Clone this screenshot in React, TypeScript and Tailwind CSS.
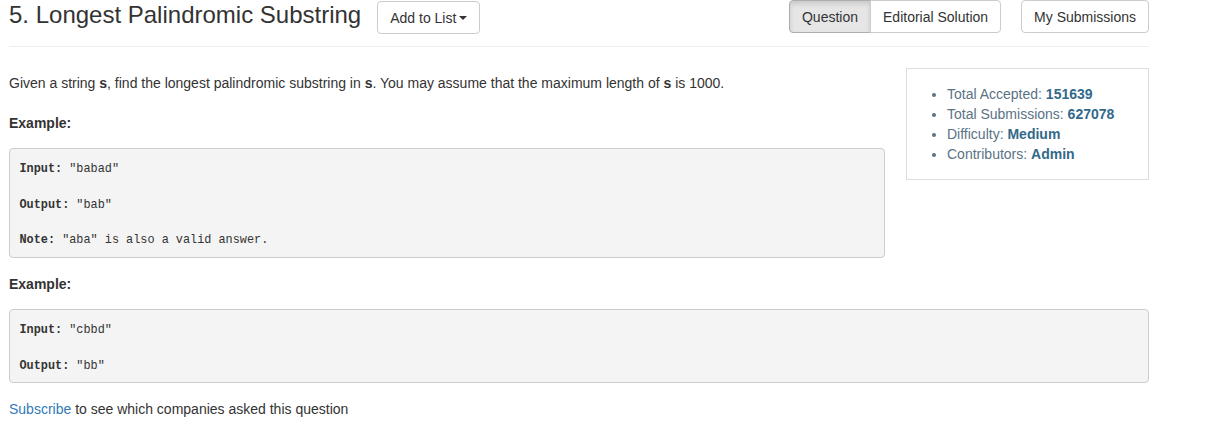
const btn =
  "h-[33px] px-3 text-[14px] leading-[20px] text-[#333] bg-white border border-[#ccc] flex items-center";

const pre =
  "mt-[15px] overflow-auto bg-[#f4f4f4] border border-[#ccc] rounded-[4px] px-[9.5px] pt-[12px] pb-[7px] text-[11.85px] leading-[17.8px] text-[#333]";

export default function App() {
  return (
    <div
      className="min-h-screen bg-white text-[#333] text-[14px] leading-[20px]"
      style={{ fontFamily: '"Liberation Sans", Arial, Helvetica, sans-serif' }}
    >
      <div className="ml-[9px] w-[1140px]">
        <div className="h-[47px] border-b border-[#eee] flex items-start">
          <h3 className="text-[24px] leading-[26px] mt-[2px] font-normal text-[#333]">
            5. Longest Palindromic Substring
          </h3>
          <button className={`${btn} ml-[16px] mt-[1px] rounded-[4px]`}>
            Add to List
            <span className="inline-block w-0 h-0 ml-[3px] border-x-[4px] border-t-[4px] border-x-transparent border-t-[#333]" />
          </button>
          <div className="ml-auto flex">
            <button className="h-[33px] px-3 text-[14px] text-[#333] bg-[#e6e6e6] border border-[#adadad] rounded-l-[4px] shadow-[inset_0_3px_5px_rgba(0,0,0,0.125)] flex items-center">
              Question
            </button>
            <button className={`${btn} -ml-px rounded-r-[4px]`}>Editorial Solution</button>
            <button className={`${btn} ml-[20px] rounded-[4px]`}>My Submissions</button>
          </div>
        </div>

        <div className="flow-root">
          <div className="float-right ml-[21px] mt-[21px] w-[243px] border border-[#ddd] py-[15px]">
            <ul className="list-disc pl-[40px] text-[#5a7385] marker:text-[#5a7385]">
              <li>
                Total Accepted: <b className="text-[#32698a]">151639</b>
              </li>
              <li>
                Total Submissions: <b className="text-[#32698a]">627078</b>
              </li>
              <li>
                Difficulty: <b className="text-[#32698a]">Medium</b>
              </li>
              <li>
                Contributors: <b className="text-[#32698a]">Admin</b>
              </li>
            </ul>
          </div>

          <p className="mt-[26px]">
            Given a string <b>s</b>, find the longest palindromic substring in <b>s</b>. You may assume that the
            maximum length of <b>s</b> is 1000.
          </p>

          <p className="mt-[20px] font-bold">Example:</p>

          <pre className={pre} style={{ fontFamily: '"Liberation Mono", Consolas, monospace' }}>
            <b>Input:</b> "babad"{"\n\n"}
            <b>Output:</b> "bab"{"\n\n"}
            <b>Note:</b> "aba" is also a valid answer.
          </pre>

          <p className="mt-[16px] font-bold">Example:</p>

          <pre className={pre} style={{ fontFamily: '"Liberation Mono", Consolas, monospace' }}>
            <b>Input:</b> "cbbd"{"\n\n"}
            <b>Output:</b> "bb"
          </pre>

          <p className="mt-[16px]">
            <a className="text-[#337ab7]" href="#">
              Subscribe
            </a>{" "}
            to see which companies asked this question
          </p>
        </div>
      </div>
    </div>
  );
}
